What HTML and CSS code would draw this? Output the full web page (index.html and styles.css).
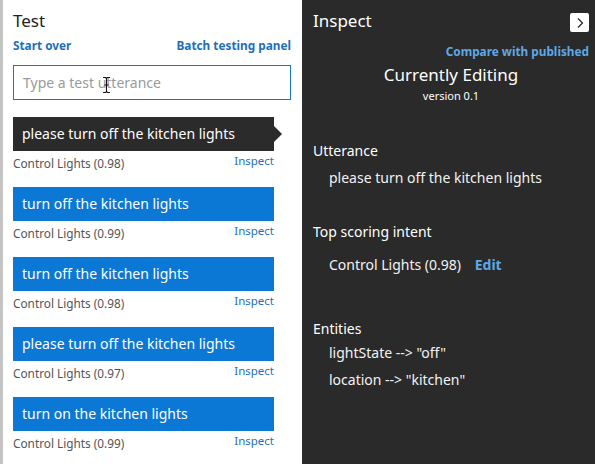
FILE: index.html
```html
<!DOCTYPE html>
<html>
<head>
<meta charset="utf-8">
<link rel="stylesheet" href="styles.css">
</head>
<body>
<div class="app">
  <section class="test">
    <h1 class="title">Test</h1>
    <div class="links">
      <a class="link">Start over</a>
      <a class="link">Batch testing panel</a>
    </div>
    <div class="input"><span class="placeholder">Type a test utterance</span><svg class="ibeam" width="9" height="18" viewBox="0 0 9 18"><path d="M1 1.5 H3.5 L4.5 2.5 L5.5 1.5 H8 M4.5 2.5 V15.5 M1 16.5 H3.5 L4.5 15.5 L5.5 16.5 H8 M2.5 9 H6.5" fill="none" stroke="#111" stroke-width="1.1"/></svg></div>
    <ul class="results">
      <li class="result">
        <div class="utter selected">please turn off the kitchen lights</div>
        <div class="meta"><span class="intent">Control Lights (0.98)</span><a class="inspect">Inspect</a></div>
      </li>
      <li class="result">
        <div class="utter">turn off the kitchen lights</div>
        <div class="meta"><span class="intent">Control Lights (0.99)</span><a class="inspect">Inspect</a></div>
      </li>
      <li class="result">
        <div class="utter">turn off the kitchen lights</div>
        <div class="meta"><span class="intent">Control Lights (0.98)</span><a class="inspect">Inspect</a></div>
      </li>
      <li class="result">
        <div class="utter">please turn off the kitchen lights</div>
        <div class="meta"><span class="intent">Control Lights (0.97)</span><a class="inspect">Inspect</a></div>
      </li>
      <li class="result">
        <div class="utter">turn on the kitchen lights</div>
        <div class="meta"><span class="intent">Control Lights (0.99)</span><a class="inspect">Inspect</a></div>
      </li>
    </ul>
  </section>
  <section class="panel">
    <div class="panel-head">
      <h2 class="title light">Inspect</h2>
      <button class="close"><svg width="10" height="12" viewBox="0 0 10 12"><path d="M3 1.5 L7.5 6 L3 10.5" fill="none" stroke="#222" stroke-width="1.2"/></svg></button>
    </div>
    <a class="compare">Compare with published</a>
    <div class="editing">Currently Editing</div>
    <div class="version">version 0.1</div>
    <h3 class="label l-utter">Utterance</h3>
    <p class="value v-utter">please turn off the kitchen lights</p>
    <h3 class="label l-intent">Top scoring intent</h3>
    <p class="value v-intent">Control Lights (0.98) <a class="edit">Edit</a></p>
    <h3 class="label l-ent">Entities</h3>
    <p class="value v-ent1">lightState --&gt; "off"</p>
    <p class="value v-ent2">location --&gt; "kitchen"</p>
  </section>
</div>
</body>
</html>
```
FILE: styles.css
```css
* { box-sizing: border-box; }
html, body { margin: 0; padding: 0; }
body {
  width: 595px;
  height: 464px;
  overflow: hidden;
  font-family: "Noto Sans", "Open Sans", sans-serif;
}
.app {
  display: flex;
  height: 464px;
}
.test {
  width: 302px;
  background: #fff;
  border-left: 3px solid #c4c4c4;
  padding: 9px 11px 0 10px;
}
.title {
  margin: 0;
  font-size: 17px;
  font-weight: 400;
  line-height: 24px;
  color: #222;
}
.title.light { color: #fff; }
.links {
  display: flex;
  justify-content: space-between;
  margin-top: 4px;
  line-height: 16px;
}
.link {
  font-size: 11.8px;
  font-weight: 700;
  color: #1f6fb8;
}
.input {
  margin-top: 12px;
  height: 35px;
  border: 1px solid #1c74c4;
  padding: 0 9px;
  display: flex;
  align-items: center;
  position: relative;
}
.placeholder {
  font-size: 14px;
  color: #9a9a9a;
}
.ibeam {
  position: absolute;
  left: 88px;
  top: 10px;
}
.results {
  list-style: none;
  margin: 17px 0 0;
  padding: 0;
  width: 261px;
}
.result {
  height: 70px;
}
.utter {
  height: 34px;
  background: #0a78d4;
  color: #fff;
  font-size: 14px;
  line-height: 34px;
  padding-left: 9px;
  position: relative;
}
.utter.selected { background: #2b2b2b; }
.utter.selected::after {
  content: "";
  position: absolute;
  right: -8px;
  top: 9px;
  border-left: 8px solid #2b2b2b;
  border-top: 8px solid transparent;
  border-bottom: 8px solid transparent;
}
.meta {
  display: flex;
  justify-content: space-between;
  align-items: flex-start;
  line-height: 16px;
  padding-top: 1px;
}
.intent {
  font-size: 11.8px;
  color: #555;
  padding-top: 3px;
}
.inspect {
  font-size: 11.5px;
  color: #1f6fb8;
  padding-top: 1px;
}
.panel {
  flex: 1;
  background: #2a2a2a;
  color: #fff;
  padding: 9px 6px 0 11px;
}
.panel-head {
  display: flex;
  justify-content: space-between;
  align-items: flex-start;
}
.close {
  margin-top: 4px;
  width: 19px;
  height: 19px;
  background: #fff;
  border: 0;
  border-radius: 2px;
  padding: 0;
  display: flex;
  align-items: center;
  justify-content: center;
}
.compare {
  display: block;
  text-align: right;
  font-size: 11.8px;
  font-weight: 700;
  color: #5ea8e6;
  margin-top: 10px;
  line-height: 16px;
}
.editing {
  text-align: center;
  font-size: 17px;
  line-height: 24px;
  margin-top: 4px;
}
.version {
  text-align: center;
  font-size: 11px;
  line-height: 18px;
}
.label {
  margin: 0;
  font-size: 14px;
  font-weight: 400;
  line-height: 20px;
}
.value {
  margin: 0;
  padding-left: 16px;
  font-size: 14px;
  line-height: 20px;
  color: #f2f2f2;
}
.l-utter { margin-top: 36px; }
.v-utter { margin-top: 7px; }
.l-intent { margin-top: 34px; }
.v-intent { margin-top: 13px; }
.l-ent { margin-top: 44px; }
.v-ent1 { margin-top: 4px; }
.v-ent2 { margin-top: 7px; }
.edit {
  font-weight: 700;
  color: #5ea8e6;
  margin-left: 10px;
}
```
